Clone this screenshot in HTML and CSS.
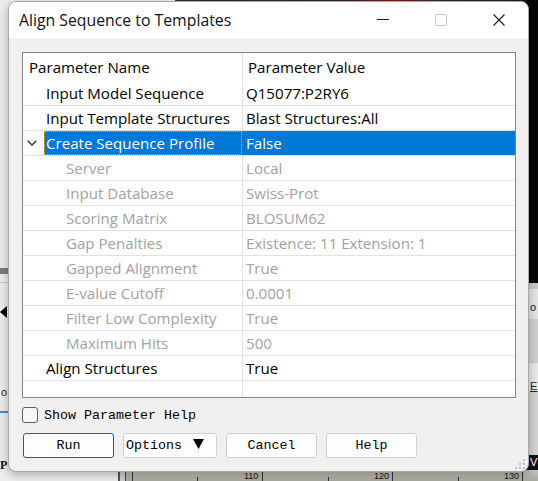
FILE: index.html
```html
<!DOCTYPE html>
<html>
<head>
<meta charset="utf-8">
<link rel="stylesheet" href="styles.css">
</head>
<body>
<div class="desktop">
  <div class="bg-top"></div>
  <div class="bg-right">
    <div class="r-black"></div>
    <div class="r-grey">
      <span class="r-o">o</span>
      <span class="r-ee">E</span>
    </div>
    <div class="r-black2"><span class="r-v">V</span></div>
  </div>
  <div class="bg-left">
    <div class="l-bar"></div>
    <div class="l-line"></div>
    <svg class="l-arrow" width="7" height="12" viewBox="0 0 7 12"><polygon points="7,0 7,12 0,6" fill="#000"/></svg>
    <div class="l-o">o</div>
    <div class="l-blue"></div>
    <div class="l-p2">P</div>
  </div>
  <div class="bg-bottom">
    <div class="b-left"></div>
    <div class="b-chart">
      <span class="b-line v1"></span>
      <span class="b-line v2"></span>
      <span class="b-line v3"></span>
      <span class="b-tick t1"></span>
      <span class="b-tick t2"></span>
      <span class="b-tick t3"></span>
      <span class="b-num n1">110</span>
      <span class="b-num n2">120</span>
      <span class="b-num n3">130</span>
    </div>
  </div>

  <div class="dialog">
    <div class="titlebar">
      <div class="title">Align Sequence to Templates</div>
      <div class="cap">
        <svg width="12" height="12" viewBox="0 0 12 12"><line x1="0" y1="5.5" x2="12" y2="5.5" stroke="#1a1a1a" stroke-width="1"/></svg>
      </div>
      <div class="cap">
        <svg width="12" height="12" viewBox="0 0 12 12"><rect x="0.5" y="0.5" width="11" height="11" rx="1.5" fill="none" stroke="#c6c6c6" stroke-width="1"/></svg>
      </div>
      <div class="cap">
        <svg width="12" height="12" viewBox="0 0 12 12"><path d="M0.5 0.5 L11.5 11.5 M11.5 0.5 L0.5 11.5" stroke="#1a1a1a" stroke-width="1.1" fill="none"/></svg>
      </div>
    </div>
    <div class="client">
      <div class="grid">
        <div class="row head"><div class="c1">Parameter Name</div><div class="c2">Parameter Value</div></div>
        <div class="row"><div class="c1 l1">Input Model Sequence</div><div class="c2">Q15077:P2RY6</div></div>
        <div class="row"><div class="c1 l1">Input Template Structures</div><div class="c2">Blast Structures:All</div></div>
        <div class="row sel">
          <div class="c1">
            <span class="chev"><svg width="10" height="6" viewBox="0 0 10 6"><path d="M0.7 0.7 L5 5 L9.3 0.7" fill="none" stroke="#333" stroke-width="1.4"/></svg></span>
            <span class="focus">Create Sequence Profile</span>
          </div>
          <div class="c2">False</div>
        </div>
        <div class="row dim"><div class="c1 l2">Server</div><div class="c2">Local</div></div>
        <div class="row dim"><div class="c1 l2">Input Database</div><div class="c2">Swiss-Prot</div></div>
        <div class="row dim"><div class="c1 l2">Scoring Matrix</div><div class="c2">BLOSUM62</div></div>
        <div class="row dim"><div class="c1 l2">Gap Penalties</div><div class="c2">Existence: 11 Extension: 1</div></div>
        <div class="row dim"><div class="c1 l2">Gapped Alignment</div><div class="c2">True</div></div>
        <div class="row dim"><div class="c1 l2">E-value Cutoff</div><div class="c2">0.0001</div></div>
        <div class="row dim"><div class="c1 l2">Filter Low Complexity</div><div class="c2">True</div></div>
        <div class="row dim"><div class="c1 l2">Maximum Hits</div><div class="c2">500</div></div>
        <div class="row"><div class="c1 l1">Align Structures</div><div class="c2">True</div></div>
        <div class="filler"><div class="c1"></div><div class="c2"></div></div>
      </div>
      <div class="check"><span class="box"></span><span class="mono">Show Parameter Help</span></div>
      <div class="buttons">
        <div class="btn default">Run</div>
        <div class="btn opt"><span>Options</span><svg class="tri" width="11" height="10" viewBox="0 0 11 10"><polygon points="0,0 11,0 5.5,10" fill="#000"/></svg></div>
        <div class="btn">Cancel</div>
        <div class="btn">Help</div>
      </div>
    </div>
    <svg class="grip" width="11" height="11" viewBox="0 0 11 11">
      <rect x="8" y="0" width="2" height="2" fill="#c4c4c4"/>
      <rect x="4" y="4" width="2" height="2" fill="#c4c4c4"/>
      <rect x="8" y="4" width="2" height="2" fill="#c4c4c4"/>
      <rect x="0" y="8" width="2" height="2" fill="#c4c4c4"/>
      <rect x="4" y="8" width="2" height="2" fill="#c4c4c4"/>
      <rect x="8" y="8" width="2" height="2" fill="#c4c4c4"/>
    </svg>
  </div>
</div>
</body>
</html>
```
FILE: styles.css
```css
html, body { margin: 0; padding: 0; }
body { width: 538px; height: 481px; overflow: hidden; background: #eeeeee; }

.desktop { position: relative; width: 538px; height: 481px; overflow: hidden; background: #eeeeee; font-family: "Open Sans", "Noto Sans", sans-serif; }

/* background app pieces */
.bg-top { position: absolute; left: 175px; top: 0; width: 363px; height: 3px; background: linear-gradient(90deg, #2a2a2a 0%, #3a2020 50%, #8a1a1a 60%, #2a2a2a 75%, #1a1a1a 100%); }
.bg-right { position: absolute; left: 526px; top: 0; width: 12px; height: 472px; display: flex; flex-direction: column; }
.r-black { height: 283px; background: #050505; }
.r-grey { position: relative; flex: 1; background: linear-gradient(#c8c8c8 0 6px, #e4e4e4 6px 36px, #cfcfcf 36px 80px, #e8e8e8 80px 108px, #d2d2d2 108px); font: 11px "Liberation Sans", sans-serif; color: #222; }
.r-o { position: absolute; left: 4px; top: 18px; }
.r-ee { position: absolute; left: 4px; top: 97px; text-decoration: underline; }
.r-black2 { position: relative; height: 17px; background: #111; }
.r-v { position: absolute; left: 4px; top: 1px; color: #fff; font: 11px "Liberation Sans", sans-serif; }

.bg-left { position: absolute; left: 0; top: 0; width: 12px; height: 481px; background: #ececec; }
.l-bar { position: absolute; left: 0; top: 268px; width: 9px; height: 6px; background: #7d7d7d; }
.l-line { position: absolute; left: 0; top: 282px; width: 9px; height: 1px; background: #c8c8c8; }
.l-arrow { position: absolute; left: 0; top: 306px; display: block; }
.l-o { position: absolute; left: 1px; top: 386px; font: 11px "Liberation Sans", sans-serif; color: #222; }
.l-blue { position: absolute; left: 0; top: 411px; width: 9px; height: 2px; background: #3c8ce0; }
.l-p2 { position: absolute; left: 0; top: 458px; font: bold 12px "Liberation Serif", serif; color: #111; }

.bg-bottom { position: absolute; left: 0; top: 470px; width: 538px; height: 11px; display: flex; }
.b-left { width: 118px; background: #eeeeee; border-right: 2px solid #555; }
.b-chart { position: relative; flex: 1; background: linear-gradient(#c4c4bc, #a9a9a0); border-left: 5px solid #cfcfcf; box-shadow: inset 1px 0 0 #444; }
.b-chart::before { content: ""; position: absolute; left: 7px; top: 0; bottom: 0; width: 1px; background: #333; }
.b-line { position: absolute; top: 0; bottom: 0; width: 1px; background: #333; }
.v1 { left: 137px; }
.v2 { left: 267px; }
.v3 { left: 397px; }
.b-tick { position: absolute; bottom: 0; width: 1px; height: 4px; background: #333; }
.t1 { left: 72px; }
.t2 { left: 203px; }
.t3 { left: 333px; }
.b-num { position: absolute; top: 1px; font: 9px "Liberation Sans", sans-serif; color: #111; }
.n1 { left: 119px; }
.n2 { left: 249px; }
.n3 { left: 379px; }

/* dialog window */
.dialog { position: absolute; left: 8px; top: 1px; width: 521px; height: 471px; box-sizing: border-box; border: 1px solid #a8a8a8; border-radius: 8px; background: #f0f0f0; box-shadow: 0 3px 10px rgba(0,0,0,0.28); overflow: hidden; }

.titlebar { height: 36px; display: flex; align-items: center; background: #ffffff; }
.title { flex: 1; padding-left: 10px; font-size: 15.8px; color: #101020; white-space: nowrap; }
.cap { width: 58px; height: 36px; display: flex; align-items: center; justify-content: center; }
.cap svg { display: block; }

.client { display: flex; flex-direction: column; }

.grid { margin: 14px 0 0 13px; width: 494px; box-sizing: border-box; border: 1px solid #848484; background: #ffffff; font-size: 15.1px; color: #000; }
.row { display: flex; height: 25px; box-sizing: border-box; border-bottom: 1px solid #e2e2e2; line-height: 24px; white-space: nowrap; }
.row.head { height: 28px; border-bottom: none; line-height: 28px; }
.c1 { width: 220px; flex: none; box-sizing: border-box; border-right: 1px solid #e2e2e2; overflow: hidden; }
.c2 { flex: 1; padding-left: 3px; overflow: hidden; }
.head .c1 { padding-left: 6px; }
.head .c2 { padding-left: 5px; }
.l1 { padding-left: 23px; }
.l2 { padding-left: 43px; }
.dim { color: #a2a2a2; }

.sel .c1 { display: flex; border-right-color: #0078d7; }
.sel .chev { width: 21px; flex: none; background: #fff; display: flex; align-items: center; justify-content: center; padding-right: 3px; box-sizing: border-box; }
.sel .chev svg { display: block; }
.sel .focus { flex: 1; background: #0078d7; color: #fff; padding-left: 2px; box-sizing: border-box; outline: 1px dotted #e8a040; outline-offset: -1px; }
.sel .c2 { background: #0078d7; color: #fff; }

.filler { display: flex; height: 16px; }
.filler .c1 { border-right: 1px solid #e2e2e2; }

.mono { font-family: "Liberation Mono", "DejaVu Sans Mono", monospace; font-size: 13.33px; color: #000; }

.check { display: flex; align-items: center; gap: 6px; height: 16px; margin: 9px 0 0 13px; }
.box { width: 16px; height: 16px; box-sizing: border-box; border: 1px solid #5e5e5e; border-radius: 3px; background: #f7f7f7; }

.buttons { display: flex; gap: 9px; margin: 10px 0 0 14px; }
.btn { width: 91px; height: 25px; box-sizing: border-box; border: 1px solid #d0d0d0; border-radius: 3px; background: #fdfdfd; display: flex; align-items: center; justify-content: center; font-family: "Liberation Mono", "DejaVu Sans Mono", monospace; font-size: 13.33px; color: #000; white-space: nowrap; }
.btn.default { border-color: #0067c0; }
.btn.opt { width: 94px; justify-content: flex-start; padding-left: 2px; }
.tri { margin-left: 11px; margin-top: -4px; display: block; }

.grip { position: absolute; right: 2px; bottom: 1px; }
```
